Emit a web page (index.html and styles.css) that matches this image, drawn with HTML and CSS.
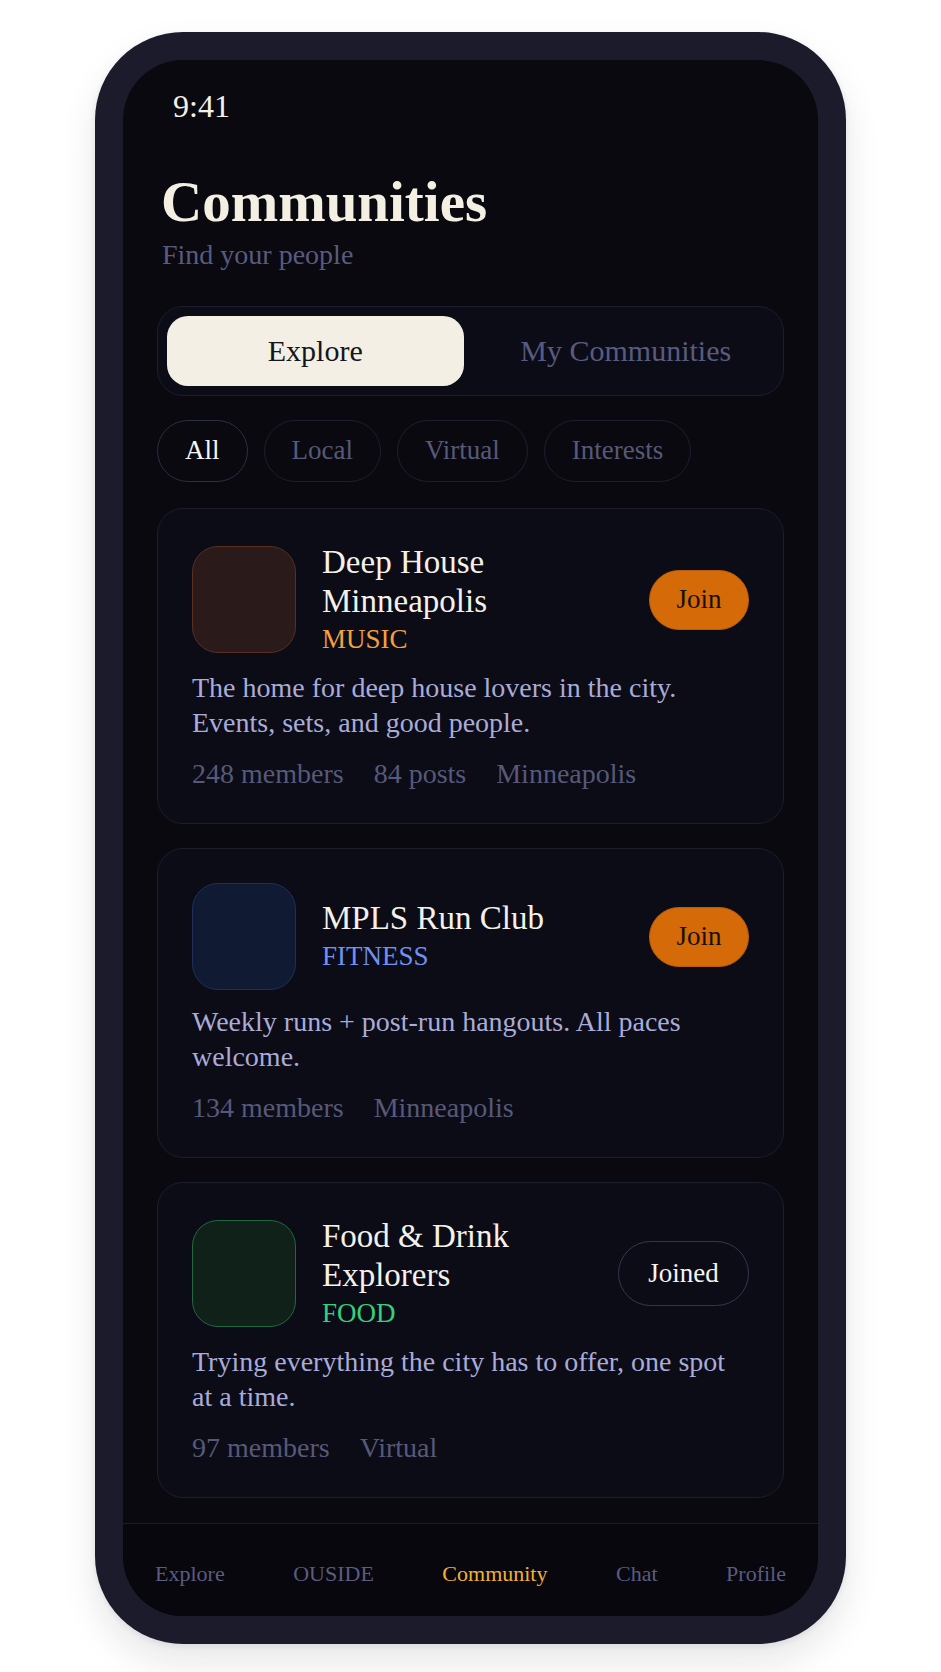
FILE: index.html
```html
<!DOCTYPE html>
<html lang="en">
<head>
<meta charset="utf-8">
<title>Communities</title>
<link rel="stylesheet" href="styles.css">
</head>
<body>
<div class="stage">
  <div class="phone">
    <div class="screen">
      <div class="status">9:41</div>
      <main class="content">
        <h1 class="title">Communities</h1>
        <p class="subtitle">Find your people</p>

        <div class="seg">
          <div class="seg-btn active">Explore</div>
          <div class="seg-btn">My Communities</div>
        </div>

        <div class="chips">
          <div class="chip active">All</div>
          <div class="chip">Local</div>
          <div class="chip">Virtual</div>
          <div class="chip">Interests</div>
        </div>

        <div class="cards">
          <article class="card">
            <div class="card-head">
              <div class="icon icon-music"></div>
              <div class="card-info">
                <div class="card-name">Deep House Minneapolis</div>
                <div class="card-cat cat-music">MUSIC</div>
              </div>
              <button class="btn btn-join">Join</button>
            </div>
            <p class="card-desc">The home for deep house lovers in the city. Events, sets, and good people.</p>
            <div class="card-meta">
              <span>248 members</span>
              <span>84 posts</span>
              <span>Minneapolis</span>
            </div>
          </article>

          <article class="card">
            <div class="card-head">
              <div class="icon icon-fitness"></div>
              <div class="card-info">
                <div class="card-name">MPLS Run Club</div>
                <div class="card-cat cat-fitness">FITNESS</div>
              </div>
              <button class="btn btn-join">Join</button>
            </div>
            <p class="card-desc">Weekly runs + post-run hangouts. All paces welcome.</p>
            <div class="card-meta">
              <span>134 members</span>
              <span>Minneapolis</span>
            </div>
          </article>

          <article class="card">
            <div class="card-head">
              <div class="icon icon-food"></div>
              <div class="card-info">
                <div class="card-name">Food &amp; Drink Explorers</div>
                <div class="card-cat cat-food">FOOD</div>
              </div>
              <button class="btn btn-joined">Joined</button>
            </div>
            <p class="card-desc">Trying everything the city has to offer, one spot at a time.</p>
            <div class="card-meta">
              <span>97 members</span>
              <span>Virtual</span>
            </div>
          </article>
        </div>
      </main>

      <nav class="tabbar">
        <span class="tab">Explore</span>
        <span class="tab">OUSIDE</span>
        <span class="tab active">Community</span>
        <span class="tab">Chat</span>
        <span class="tab">Profile</span>
      </nav>
    </div>
  </div>
</div>
</body>
</html>
```

FILE: styles.css
```css
* {
  box-sizing: border-box;
}

html, body {
  margin: 0;
  padding: 0;
  background: #ffffff;
}

body {
  font-family: "Liberation Serif", "Times New Roman", serif;
}

.stage {
  display: flex;
  justify-content: center;
  padding: 32px 0 28px;
}

.phone {
  width: 751px;
  height: 1612px;
  background: #1b1b2b;
  border-radius: 88px;
  padding: 28px;
  box-shadow: 0 18px 36px rgba(20, 20, 40, 0.10), 0 2px 6px rgba(20, 20, 40, 0.08);
}

.screen {
  height: 100%;
  background: #09090f;
  border-radius: 60px;
  overflow: hidden;
  display: flex;
  flex-direction: column;
}

.status {
  padding: 27px 50px 0;
  font-size: 32px;
  line-height: 38px;
  color: #f4f1ea;
}

.content {
  padding: 0 34px;
}

.title {
  margin: 46px 0 0;
  padding-left: 4px;
  font-size: 57px;
  line-height: 61.6px;
  font-weight: 700;
  color: #f3efe3;
}

.subtitle {
  margin: 5px 0 0;
  padding-left: 5px;
  font-size: 28px;
  line-height: 34px;
  color: #585b80;
}

.seg {
  margin-top: 34px;
  display: grid;
  grid-template-columns: 1fr 1fr;
  gap: 14px;
  padding: 9px;
  background: #0c0c17;
  border: 1px solid #1c1d2e;
  border-radius: 26px;
}

.seg-btn {
  height: 70px;
  border-radius: 21px;
  display: flex;
  align-items: center;
  justify-content: center;
  font-size: 30px;
  line-height: 36px;
  color: #585b80;
}

.seg-btn.active {
  background: #f3efe4;
  color: #15151d;
}

.chips {
  margin-top: 24px;
  display: flex;
  gap: 16px;
}

.chip {
  height: 62px;
  padding: 0 27px;
  border: 1px solid #1d1e30;
  border-radius: 31px;
  display: flex;
  align-items: center;
  font-size: 27px;
  color: #565979;
}

.chip.active {
  color: #f6f6f8;
  border-color: #2c2e46;
}

.cards {
  margin-top: 26px;
  display: flex;
  flex-direction: column;
  gap: 24px;
}

.card {
  background: #0c0c17;
  border: 1px solid #1c1d2d;
  border-radius: 26px;
  padding: 34px 34px 32px;
}

.card-head {
  display: flex;
  align-items: center;
}

.icon {
  flex: none;
  width: 104px;
  height: 107px;
  margin: 0.5px 26px 0.5px 0;
  border-radius: 26px;
  border: 1.5px solid;
}

.icon-music {
  background: #2a1a1a;
  border-color: #5a2f1f;
}

.icon-fitness {
  background: #111a33;
  border-color: #1f2f5c;
}

.icon-food {
  background: #0f2119;
  border-color: #1d6a3e;
}

.card-info {
  flex: 1;
  min-width: 0;
  padding-right: 20px;
}

.card-name {
  font-size: 33px;
  line-height: 39.6px;
  color: #f4f1ea;
}

.card-cat {
  font-size: 27px;
  line-height: 35px;
}

.cat-music { color: #f4a03c; }
.cat-fitness { color: #7191f2; }
.cat-food { color: #35d07a; }

.btn {
  flex: none;
  font-family: "Liberation Serif", "Times New Roman", serif;
  font-size: 27px;
  border-radius: 40px;
  display: flex;
  align-items: center;
  justify-content: center;
  cursor: pointer;
}

.btn-join {
  height: 60px;
  width: 100px;
  padding: 0;
  background: #d56a08;
  border: 1px solid #b95c0e;
  color: #171006;
}

.btn-joined {
  height: 65px;
  width: 131px;
  padding: 0;
  background: transparent;
  border: 1.5px solid #35364e;
  color: #f4f4f6;
}

.card-desc {
  margin: 13px 0 0;
  max-width: 550px;
  font-size: 28px;
  line-height: 35px;
  color: #a9abd8;
}

.card-meta {
  margin-top: 16px;
  display: flex;
  gap: 30px;
  font-size: 28px;
  line-height: 35px;
  color: #565979;
}

.tabbar {
  margin-top: auto;
  height: 93px;
  border-top: 1px solid #1a1b2b;
  background: #07070d;
  padding: 37px 32px 0;
  display: flex;
  justify-content: space-between;
  align-items: flex-start;
}

.tab {
  font-size: 22px;
  line-height: 26.4px;
  color: #5a5c80;
}

.tab.active {
  color: #f1b233;
}
```
